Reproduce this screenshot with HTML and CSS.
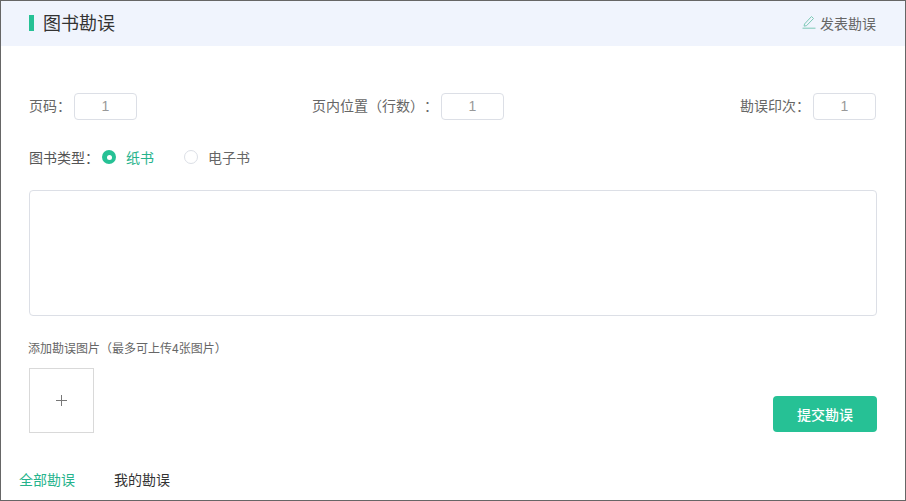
FILE: index.html
```html
<!DOCTYPE html>
<html lang="zh-CN">
<head>
<meta charset="utf-8">
<title>图书勘误</title>
<link rel="stylesheet" href="styles.css">
</head>
<body>
<main class="frame">
  <header class="head">
    <h1 class="title">图书勘误</h1>
    <a class="publish">
      <svg class="pen" width="14" height="14" viewBox="0 0 14 14" fill="none" stroke="#7cc9b6" stroke-width="1"><path d="M2.5 9 9.5 1.5l2 2-7 7.2-2.4.4z"/><path d="M0.5 13.2h13"/></svg>
      发表勘误
    </a>
  </header>
  <section class="body">
    <div class="fields">
      <label class="field">页码：<span class="num">1</span></label>
      <label class="field field-mid">页内位置（行数）：<span class="num">1</span></label>
      <label class="field">勘误印次：<span class="num">1</span></label>
    </div>
    <div class="types">
      <span class="types-label">图书类型：</span>
      <span class="radio on"></span><span class="radio-text on-text">纸书</span>
      <span class="radio off"></span><span class="radio-text">电子书</span>
    </div>
    <div class="area"></div>
    <p class="hint">添加勘误图片（最多可上传4张图片）</p>
    <div class="bottom">
      <div class="upload">
        <svg width="13" height="13" viewBox="0 0 13 13" stroke="#777" stroke-width="1"><path d="M6.5 1v11M1 6.5h11"/></svg>
      </div>
      <button class="submit">提交勘误</button>
    </div>
  </section>
  <nav class="tabs">
    <span class="tab active">全部勘误</span>
    <span class="tab">我的勘误</span>
  </nav>
</main>
</body>
</html>
```
FILE: styles.css
```css
* { box-sizing: border-box; }
html, body { margin: 0; padding: 0; background: #fff; }
body { font-family: "Noto Sans CJK SC", "Liberation Sans", sans-serif; overflow: hidden; text-spacing-trim: space-all; }
.frame { width: 906px; height: 501px; border: 1px solid #666; overflow: hidden; display: flex; flex-direction: column; }
.head { height: 45px; flex: none; background: #f0f4fd; display: flex; align-items: center; justify-content: space-between; padding: 0 29px 2px 28px; }
.title { margin: 0; font-size: 18px; font-weight: 400; color: #333; line-height: 24px; border-left: 5px solid #26c195; height: 16px; display: flex; align-items: center; padding: 0 0 2px 9px; }
.publish { font-size: 14px; color: #666; display: flex; align-items: center; gap: 4px; }
.pen { margin-top: -2px; }
.body { padding: 47px 28px 0; flex: none; }
.fields { display: flex; justify-content: space-between; height: 27px; padding-right: 1px; }
.field { display: flex; align-items: flex-start; font-size: 14px; line-height: 25px; color: #666; }
.field-mid { margin-right: 61px; }
.num { width: 63px; height: 27px; margin-left: 3px; border: 1px solid #dcdfe6; border-radius: 4px; display: flex; align-items: center; justify-content: center; color: #999; font-family: "Liberation Sans", sans-serif; font-size: 14px; }
.types { display: flex; align-items: center; height: 20px; margin-top: 27px; font-size: 14px; color: #666; }
.types-label { color: #555; width: 73px; }
.radio { width: 14px; height: 14px; border-radius: 50%; flex: none; }
.radio.on { background: #26c195; display: flex; align-items: center; justify-content: center; }
.radio.on::after { content: ""; width: 5px; height: 5px; background: #fff; border-radius: 50%; }
.radio.off { border: 1px solid #dcdfe6; margin-left: 30px; }
.radio-text { margin-left: 10px; }
.on-text { color: #26b38c; }
.area { height: 126px; margin-top: 23px; width: 848px; border: 1px solid #dcdfe6; border-radius: 4px; background: #fff; }
.hint { margin: 23px 0 0 -1px; font-size: 12px; line-height: 18px; color: #666; }
.bottom { display: flex; justify-content: space-between; align-items: flex-end; margin-top: 11px; width: 848px; }
.upload { width: 65px; height: 65px; border: 1px solid #d9d9d9; display: flex; align-items: center; justify-content: center; }
.submit { width: 104px; height: 36px; margin-bottom: 1px; border: 0; border-radius: 4px; background: #26c195; color: #fff; font: 500 14px "Noto Sans CJK SC", sans-serif; padding: 0; }
.tabs { display: flex; gap: 39px; padding-left: 18px; margin-top: 36px; font-size: 14px; line-height: 20px; color: #333; }
.tab.active { color: #26b38c; }
```
